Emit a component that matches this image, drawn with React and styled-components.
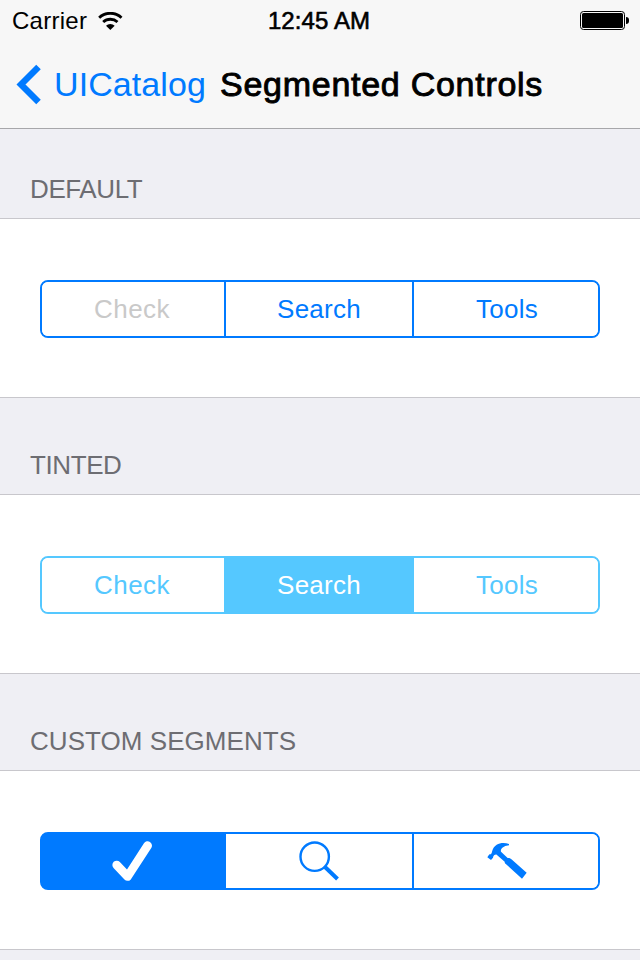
import React from "react";
import styled, { createGlobalStyle } from "styled-components";

const GlobalStyle = createGlobalStyle`
  * { box-sizing: border-box; }
  body {
    margin: 0;
    background: #efeff4;
    font-family: "Liberation Sans", Arial, sans-serif;
    -webkit-font-smoothing: antialiased;
  }
`;

const Screen = styled.div`
  width: 640px;
  height: 960px;
  overflow: hidden;
  background: #efeff4;
`;

const TopBar = styled.header`
  height: 129px;
  background: #f7f7f7;
  border-bottom: 1px solid #a7a7aa;
`;

const StatusBar = styled.div`
  display: grid;
  grid-template-columns: 1fr auto 1fr;
  align-items: center;
  height: 41px;
  padding: 0 11px 0 12px;
  font-size: 24px;
  line-height: 41px;
  color: #000;
`;

const Carrier = styled.div`
  display: flex;
  align-items: center;
  gap: 11px;
  letter-spacing: 0.26px;
`;

const Clock = styled.div`
  padding-right: 3px;
  letter-spacing: 0.1px;
  -webkit-text-stroke: 0.6px #000;
`;

const Battery = styled.div`
  display: flex;
  align-items: center;
  justify-content: flex-end;
  gap: 1px;
`;

const BatteryCase = styled.div`
  width: 45px;
  height: 19px;
  padding: 1px;
  border: 1px solid #000;
  border-radius: 3.5px;
`;

const BatteryCharge = styled.div`
  height: 100%;
  border-radius: 1.5px;
  background: #000;
`;

const BatteryCap = styled.div`
  width: 3px;
  height: 7px;
  border-radius: 0 3px 3px 0;
  background: #000;
`;

const NavBar = styled.nav`
  display: flex;
  align-items: center;
  height: 87px;
  padding-left: 16px;
  font-size: 34px;
  line-height: 87px;
  white-space: nowrap;
`;

const BackButton = styled.a`
  display: flex;
  align-items: center;
  gap: 12px;
  width: 204px;
  color: #007aff;
  letter-spacing: 0.08px;
`;

const Title = styled.h1`
  margin: 0;
  font-size: 34px;
  font-weight: 400;
  letter-spacing: 0.73px;
  color: #000;
  -webkit-text-stroke: 0.9px #000;
`;

const SectionHeader = styled.h2`
  display: flex;
  align-items: flex-end;
  height: ${(p) => (p.$first ? 89 : 96)}px;
  margin: 0;
  padding: 0 30px 14px;
  font-size: 26px;
  font-weight: 400;
  line-height: 30px;
  letter-spacing: ${(p) => p.$tracking}px;
  color: #6d6d72;
`;

const Cell = styled.div`
  height: 180px;
  padding: 61px 40px 0;
  background: #fff;
  border-top: 1px solid #c8c7cc;
  border-bottom: 1px solid #c8c7cc;
`;

const SegmentedControl = styled.div`
  display: grid;
  grid-template-columns: 184px 188px 1fr;
  height: 58px;
  overflow: hidden;
  border: 2px solid ${(p) => p.$tint};
  border-radius: 8px;
  color: ${(p) => p.$tint};
  background: ${(p) => p.$fill || "#fff"};
`;

const Segment = styled.button`
  display: flex;
  align-items: center;
  justify-content: center;
  padding: 0 ${(p) => p.$inset || 0}px 0 ${(p) => (p.$last ? 2 : 0)}px;
  border: 0;
  border-right: ${(p) => (p.$last ? "0" : `2px solid ${p.$tint}`)};
  background: ${(p) => (p.$selected ? p.$tint : "#fff")};
  color: ${(p) => (p.$selected ? "#fff" : p.disabled ? "#c9c9c9" : p.$tint)};
  font: 26px/54px "Liberation Sans", Arial, sans-serif;
  letter-spacing: ${(p) => p.$tracking || 0}px;
`;

const Icon = styled.svg`
  display: block;
  flex: none;
`;

const WifiIcon = () => (
  <Icon width="25" height="18" viewBox="295 33 75 54" fill="none" stroke="#000" strokeWidth="8.5">
    <path d="M298.5 50 A49 49 0 0 1 365.5 50" />
    <path d="M310.5 63 A32 32 0 0 1 353.5 63" />
    <path d="M332 87 L319 74.5 A18 18 0 0 1 345 74.5 Z" fill="#000" stroke="none" />
  </Icon>
);

const BackIcon = () => (
  <Icon width="26" height="42" viewBox="0 0 26 42" fill="none" stroke="#007aff" strokeWidth="6.4">
    <path d="M22.5 2.9 L5 20.5 L22.5 38.1" />
  </Icon>
);

const CheckIcon = () => (
  <Icon width="42" height="42" viewBox="0 0 42 42" fill="none" stroke="currentColor" strokeWidth="8.7" strokeLinecap="round" strokeLinejoin="round">
    <path d="M5.7 25 L16.6 36.5 L36.6 5.6" />
  </Icon>
);

const SearchIcon = () => (
  <Icon width="42" height="42" viewBox="0 0 42 42" fill="none" stroke="currentColor">
    <circle cx="16.7" cy="16.7" r="14.2" strokeWidth="2.4" />
    <path d="M26.5 26.5 L39.5 39" strokeWidth="4" />
  </Icon>
);

const HammerIcon = () => (
  <Icon width="40" height="38" viewBox="51 51 120 114" fill="currentColor">
    <path d="M117 57 C105 52 90 53 80 59 C72 64 68 71 66 80 C65 86 62 89 58 88 L52 97 L63 105 L69 98 C70 91 75 88 80 89 L104 110 C104 114 106 116 110 119 L156 161 L170 143 L126 104 C122 100 117 98 113 99 L93 80 C91 74 95 68 102 65 C107 62 112 62 117 61 Z" />
  </Icon>
);

const BLUE = "#007aff";
const SKY = "#55c8ff";

export default function App() {
  return (
    <Screen>
      <GlobalStyle />
      <TopBar>
        <StatusBar>
          <Carrier>
            Carrier
            <WifiIcon />
          </Carrier>
          <Clock>12:45 AM</Clock>
          <Battery>
            <BatteryCase>
              <BatteryCharge />
            </BatteryCase>
            <BatteryCap />
          </Battery>
        </StatusBar>
        <NavBar>
          <BackButton>
            <BackIcon />
            UICatalog
          </BackButton>
          <Title>Segmented Controls</Title>
        </NavBar>
      </TopBar>

      <SectionHeader $first $tracking={-0.4}>DEFAULT</SectionHeader>
      <Cell>
        <SegmentedControl $tint={BLUE}>
          <Segment $tint={BLUE} $tracking={0.5} $inset={2} disabled>Check</Segment>
          <Segment $tint={BLUE} $tracking={0.25}>Search</Segment>
          <Segment $tint={BLUE} $tracking={0.3} $last>Tools</Segment>
        </SegmentedControl>
      </Cell>

      <SectionHeader $tracking={-0.4}>TINTED</SectionHeader>
      <Cell>
        <SegmentedControl $tint={SKY}>
          <Segment $tint={SKY} $tracking={0.5} $inset={2}>Check</Segment>
          <Segment $tint={SKY} $tracking={0.25} $selected>Search</Segment>
          <Segment $tint={SKY} $tracking={0.3} $last>Tools</Segment>
        </SegmentedControl>
      </Cell>

      <SectionHeader $tracking={0.05}>CUSTOM SEGMENTS</SectionHeader>
      <Cell>
        <SegmentedControl $tint={BLUE} $fill={`linear-gradient(90deg, ${BLUE} 50%, #fff 50%)`}>
          <Segment $tint={BLUE} $inset={2} $selected><CheckIcon /></Segment>
          <Segment $tint={BLUE}><SearchIcon /></Segment>
          <Segment $tint={BLUE} $last><HammerIcon /></Segment>
        </SegmentedControl>
      </Cell>
    </Screen>
  );
}
